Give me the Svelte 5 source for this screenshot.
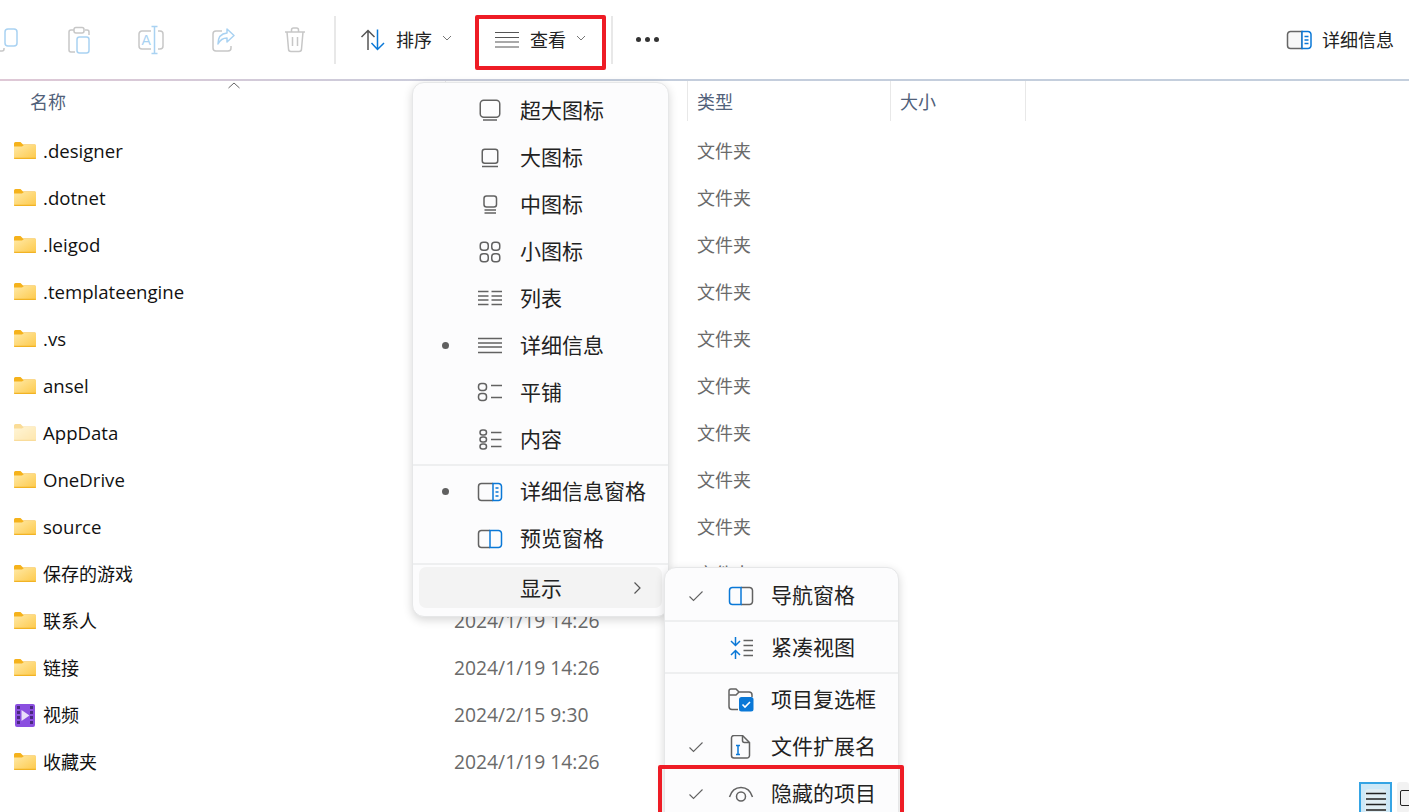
<script>
  const files = [
    { n: '.designer', t: '文件夹' }, { n: '.dotnet', t: '文件夹' }, { n: '.leigod', t: '文件夹' },
    { n: '.templateengine', t: '文件夹' }, { n: '.vs', t: '文件夹' }, { n: 'ansel', t: '文件夹' },
    { n: 'AppData', t: '文件夹', faded: true }, { n: 'OneDrive', t: '文件夹' }, { n: 'source', t: '文件夹' },
    { n: '保存的游戏', t: '文件夹', cjk: true }, { n: '联系人', d: '2024/1/19 14:26', cjk: true }, { n: '链接', d: '2024/1/19 14:26', cjk: true },
    { n: '视频', d: '2024/2/15 9:30', video: true, cjk: true }, { n: '收藏夹', d: '2024/1/19 14:26', cjk: true }
  ];
</script>

{#snippet mitem(label, bullet, icon)}
  <div class="mi">
    <span class="mark">{#if bullet}<i class="dot"></i>{/if}</span>
    <span class="ic">{@render icon()}</span>
    <span class="lb">{label}</span>
  </div>
{/snippet}

{#snippet subitem(label, check, icon)}
  <div class="si">
    <span class="smark">{#if check}<svg width="16" height="12" viewBox="0 0 16 12"><path d="M1.500 6.500 5.500 10.500 14.500 1.500" class="g thin"/></svg>{/if}</span>
    <span class="ic">{@render icon()}</span>
    <span class="lb">{label}</span>
  </div>
{/snippet}

{#snippet ixl()}<svg width="30" height="24" viewBox="0 0 30 24"><rect x="5.250" y="1.250" width="19.500" height="17" rx="3.500" class="g"/><path d="M8 21h14" class="g"/></svg>{/snippet}
{#snippet il()}<svg width="30" height="24" viewBox="0 0 30 24"><rect x="7.250" y="3.250" width="15.500" height="14" rx="2.500" class="g"/><path d="M7 20.500h16" class="g"/></svg>{/snippet}
{#snippet im()}<svg width="30" height="24" viewBox="0 0 30 24"><rect x="9" y="3" width="12.500" height="11" rx="2.500" class="g"/><path d="M9.500 17h11.500M9.500 20h11.500" class="g"/></svg>{/snippet}
{#snippet is()}<svg width="30" height="24" viewBox="0 0 30 24"><rect x="5.250" y="2.250" width="8" height="8" rx="3" class="g"/><rect x="16.750" y="2.250" width="8" height="8" rx="3" class="g"/><rect x="5.250" y="13.750" width="8" height="8" rx="3" class="g"/><rect x="16.750" y="13.750" width="8" height="8" rx="3" class="g"/></svg>{/snippet}
{#snippet ilist()}<svg width="30" height="24" viewBox="0 0 30 24"><path d="M3 4.500h10.500M3 9h10.500M3 13h10.500M3 17.500h10.500M16.500 4.500H27M16.500 9H27M16.500 13H27M16.500 17.500H27" class="g"/></svg>{/snippet}
{#snippet idetail()}<svg width="30" height="24" viewBox="0 0 30 24"><path d="M3 4.500h24M3 9h24M3 13h24M3 18.500h24" class="g"/></svg>{/snippet}
{#snippet itile()}<svg width="30" height="24" viewBox="0 0 30 24"><rect x="3.500" y="2.500" width="8" height="7" rx="3" class="g"/><rect x="3.500" y="12.500" width="8" height="7" rx="3" class="g"/><path d="M16 4.500h11M16 16.500h11" class="g"/></svg>{/snippet}
{#snippet icontent()}<svg width="30" height="24" viewBox="0 0 30 24"><rect x="5" y="2" width="6.500" height="5" rx="2.500" class="g"/><rect x="5" y="9" width="6.500" height="5" rx="2.500" class="g"/><rect x="5" y="16" width="6.500" height="5" rx="2.500" class="g"/><path d="M16 4.500h10.500M16 11.500h10.500M16 18.500h10.500" class="g"/></svg>{/snippet}
{#snippet ipanedetail()}<svg width="30" height="24" viewBox="0 0 30 24"><path d="M18 3.500H6.500a3 3 0 0 0-3 3v11a3 3 0 0 0 3 3H18" class="g"/><path d="M18 3.500h5.500a3 3 0 0 1 3 3v11a3 3 0 0 1-3 3H18z" class="b"/><path d="M20.500 8h3M20.500 12h3M20.500 16h3" class="b"/></svg>{/snippet}
{#snippet ipanepre()}<svg width="30" height="24" viewBox="0 0 30 24"><path d="M15 3.500H6.500a3 3 0 0 0-3 3v11a3 3 0 0 0 3 3H15" class="g"/><path d="M15 3.500h8.500a3 3 0 0 1 3 3v11a3 3 0 0 1-3 3H15z" class="b"/></svg>{/snippet}
{#snippet inav()}<svg width="30" height="24" viewBox="0 0 30 24"><path d="M15 3.500h8.500a3 3 0 0 1 3 3v11a3 3 0 0 1-3 3H15" class="g"/><path d="M15 3.500H6.500a3 3 0 0 0-3 3v11a3 3 0 0 0 3 3H15z" class="b"/></svg>{/snippet}
{#snippet icompact()}<svg width="30" height="24" viewBox="0 0 30 24"><path d="M9.500 1v8.500M5 5l4.500 4.500L14 5M9.500 23v-8.500M5 19l4.500-4.500L14 19" class="b"/><path d="M17.500 4.500h9.500M17.500 9.500h9.500M17.500 14.500h9.500M17.500 19.500h9.500" class="g"/></svg>{/snippet}
{#snippet icheck()}<svg width="30" height="24" viewBox="0 0 30 24"><path d="M12 21.500H6a3 3 0 0 1-3-3V3a2 2 0 0 1 2-2h5l3 3h10a3 3 0 0 1 3 3V9" class="g"/><path d="M3.500 7H10l3-3" class="g"/><rect x="13" y="9" width="14.500" height="14.500" rx="2.500" fill="#0a78d7"/><path d="M16.500 16.500l2.500 2.500 5-5" fill="none" stroke="#fff" stroke-width="1.600"/></svg>{/snippet}
{#snippet ifile()}<svg width="30" height="24" viewBox="0 0 30 24"><path d="M8 0.500h8.500l7 7v13a2.500 2.500 0 0 1-2.500 2.500H8a2.500 2.500 0 0 1-2.500-2.500V3A2.500 2.500 0 0 1 8 0.500z" class="g"/><path d="M16.500 1v4.500a2 2 0 0 0 2 2H23" class="g"/><path d="M10 10.500h4M10 19.500h4M12 10.500v9" class="b"/></svg>{/snippet}
{#snippet ieye()}<svg width="30" height="24" viewBox="0 0 30 24"><path d="M3.500 15C5.500 8.500 10 5.500 15 5.500s9.500 3 11.500 9.500" class="g"/><circle cx="15" cy="14.500" r="4.500" class="g"/></svg>{/snippet}

{#snippet folder(faded)}
  <svg class="fold" class:faded width="24" height="19" viewBox="0 0 24 19"><defs><linearGradient id="fb" x1="0" y1="0" x2="1" y2="1"><stop offset="0" stop-color="#ffe9a6"/><stop offset="1" stop-color="#fdc94a"/></linearGradient></defs><path d="M1 2.500A1.500 1.500 0 0 1 2.500 1h5L10 3.500h12.500V6H1z" fill="#f5b21b"/><path d="M1 5.500h8L11 4h11a1 1 0 0 1 1 1v12a1 1 0 0 1-1 1H2a1 1 0 0 1-1-1z" fill="url(#fb)"/><path d="M1 16.800h22v.5a.8.8 0 0 1-.8.8H1.800a.8.8 0 0 1-.8-.8z" fill="#f2b324"/></svg>
{/snippet}

<div class="page">
  <header class="toolbar">
    <div class="tb cut"><svg width="24" height="26" viewBox="0 0 24 26"><rect x="6" y="2" width="12" height="17" rx="3" fill="none" stroke="#a9d2f2" stroke-width="1.500"/><path d="M5 21v1a2 2 0 0 1-2 2H-5" fill="none" stroke="#c7c7c7" stroke-width="1.500"/></svg></div>
    <div class="tb"><svg width="24" height="28" viewBox="0 0 24 28"><path d="M7 4H4a2 2 0 0 0-2 2v18a2 2 0 0 0 2 2h4" fill="none" stroke="#c7c7c7" stroke-width="1.500"/><path d="M18 4h2a2 2 0 0 1 2 2v3" fill="none" stroke="#c7c7c7" stroke-width="1.500"/><rect x="7" y="1.500" width="10" height="5.500" rx="2" fill="none" stroke="#c7c7c7" stroke-width="1.500"/><rect x="10" y="11" width="12" height="16" rx="2.500" fill="none" stroke="#a9d2f2" stroke-width="1.500"/></svg></div>
    <div class="tb"><svg width="26" height="30" viewBox="0 0 26 30"><path d="M13 6H4a3 3 0 0 0-3 3v12a3 3 0 0 0 3 3h9M20 6h2a3 3 0 0 1 3 3v12a3 3 0 0 1-3 3h-2" fill="none" stroke="#c7c7c7" stroke-width="1.500"/><path d="M16.500 2v26M13.500 1.500h6M13.500 28.500h6" fill="none" stroke="#a9d2f2" stroke-width="1.500"/><text x="3.500" y="20" font-size="14" fill="#a9d2f2" class="glyph">A</text></svg></div>
    <div class="tb"><svg width="24" height="26" viewBox="0 0 24 26"><path d="M11 4H5a3 3 0 0 0-3 3v14a3 3 0 0 0 3 3h12a3 3 0 0 0 3-3v-2" fill="none" stroke="#c7c7c7" stroke-width="1.500"/><path d="M16 2l7 6.500-7 6.500v-4c-5 0-7 2-9 6 0-7 3-10.500 9-11z" fill="none" stroke="#a9d2f2" stroke-width="1.500" stroke-linejoin="round"/></svg></div>
    <div class="tb"><svg width="22" height="26" viewBox="0 0 22 26"><path d="M1 5h20M7.500 5V3a2 2 0 0 1 2-2h3a2 2 0 0 1 2 2v2M3 5l1.500 17a2.500 2.500 0 0 0 2.500 2.500h8a2.500 2.500 0 0 0 2.500-2.500L19 5M8.500 10v9M13.500 10v9" fill="none" stroke="#c7c7c7" stroke-width="1.500"/></svg></div>
    <i class="vsep first"></i>
    <div class="cmd sort">
      <svg width="26" height="24" viewBox="0 0 26 24"><path d="M8 22V3M1.500 9 8 2.500 14.500 9" fill="none" stroke="#555" stroke-width="1.500"/><path d="M17.500 1.500V21M11.500 15l6 6.500 6.500-6.500" fill="none" stroke="#0a78d7" stroke-width="1.500"/></svg>
      <span class="cmdl">排序</span>
      <svg class="chev" width="10" height="6" viewBox="0 0 10 6"><path d="M1 1l4 4 4-4" fill="none" stroke="#777"/></svg>
    </div>
    <div class="cmd view">
      <svg width="24" height="18" viewBox="0 0 24 18"><path d="M0 1.500h24M0 6.500h24M0 11h24M0 16h24" fill="none" stroke="#555" stroke-width="1.200"/></svg>
      <span class="cmdl">查看</span>
      <svg class="chev" width="10" height="6" viewBox="0 0 10 6"><path d="M1 1l4 4 4-4" fill="none" stroke="#777"/></svg>
    </div>
    <i class="vsep second"></i>
    <div class="more"><i></i><i></i><i></i></div>
    <div class="details">
      <svg width="26" height="20" viewBox="0 0 26 20"><path d="M16 1.500H4.500a3 3 0 0 0-3 3v11a3 3 0 0 0 3 3H16z" fill="#f7f7f7" stroke="#666" stroke-width="1.500"/><path d="M16 1.500h6a3 3 0 0 1 3 3v11a3 3 0 0 1-3 3h-6z" fill="#fff" stroke="#0a78d7" stroke-width="1.500"/><path d="M18.500 6.500h4M18.500 10h4M18.500 13.500h4" stroke="#0a78d7" stroke-width="1.400"/></svg>
      <span class="cmdl">详细信息</span>
    </div>
  </header>
  <div class="rule"></div>

  <div class="cols">
    <div class="col c1"><span>名称</span><svg class="sortup" width="12" height="7" viewBox="0 0 12 7"><path d="M.5 6 6 1l5.500 5" fill="none" stroke="#666"/></svg></div>
    <div class="col c2"></div>
    <div class="col c3"><span>类型</span></div>
    <div class="col c4"><span>大小</span></div>
  </div>

  <div class="list">
    {#each files as f}
      <div class="row">
        <div class="name">
          {#if f.video}
            <svg class="fold" width="24" height="24" viewBox="0 0 24 24"><rect x="2" y="1" width="20" height="23" rx="2" fill="#8b4fe0"/><path d="M4 3h3v3H4zM4 8h3v3H4zM4 13h3v3H4zM4 18h3v3H4zM17 3h3v3h-3zM17 8h3v3h-3zM17 13h3v3h-3zM17 18h3v3h-3z" fill="#4a2a80"/><path d="M8.500 7l8 5.500-8 5.500z" fill="#e9defa"/></svg>
          {:else}
            {@render folder(f.faded)}
          {/if}
          <span class:cjk={f.cjk}>{f.n}</span>
        </div>
        <div class="date">{f.d ?? ''}</div>
        <div class="type">{f.t ?? ''}</div>
      </div>
    {/each}
  </div>

  <div class="viewbtns">
    <div class="vb on"><div class="vbin"><svg width="20" height="20" viewBox="0 0 20 20"><path d="M0 1.500h20M0 7h20M0 12.500h20M0 18h20" stroke="#222" stroke-width="1.300"/></svg></div></div>
    <div class="vb off"></div>
  </div>

  <div class="menu main">
    {@render mitem('超大图标', false, ixl)}
    {@render mitem('大图标', false, il)}
    {@render mitem('中图标', false, im)}
    {@render mitem('小图标', false, is)}
    {@render mitem('列表', false, ilist)}
    {@render mitem('详细信息', true, idetail)}
    {@render mitem('平铺', false, itile)}
    {@render mitem('内容', false, icontent)}
    <div class="sep"></div>
    {@render mitem('详细信息窗格', true, ipanedetail)}
    {@render mitem('预览窗格', false, ipanepre)}
    <div class="sep"></div>
    <div class="showrow">
      <span class="showl">显示</span>
      <svg width="9" height="14" viewBox="0 0 9 14"><path d="M1.500 1.500 7 7l-5.500 5.500" fill="none" stroke="#555" stroke-width="1.200"/></svg>
    </div>
  </div>

  <div class="menu submenu">
    {@render subitem('导航窗格', true, inav)}
    <div class="sep"></div>
    {@render subitem('紧凑视图', false, icompact)}
    <div class="sep"></div>
    {@render subitem('项目复选框', false, icheck)}
    {@render subitem('文件扩展名', true, ifile)}
    {@render subitem('隐藏的项目', true, ieye)}
  </div>

  <div class="mark-box box1"></div>
  <div class="mark-box box2"></div>
</div>

<style>
  :global(body) { margin: 0; background: #fff; }
  .page { position: relative; width: 1409px; height: 812px; overflow: hidden; background: #fff;
    font-family: "Open Sans", "Noto Sans CJK SC", sans-serif; color: #1a1a1a; font-size: 18px; }
  .toolbar { display: flex; align-items: center; height: 79px; }
  .tb { width: 72px; display: flex; justify-content: center; align-items: center; flex: none; }
  .cut { width: 7px; overflow: visible; justify-content: flex-start; margin-right: 36px; }
  .cut svg { margin-left: -1px; overflow: visible; flex: none; }
  .vsep { display: block; width: 2px; height: 48px; background: #e8e8e8; flex: none; }
  .vsep.first { margin-left: 3px; }
  .vsep.second { margin-left: 25px; }
  .cmd { display: flex; align-items: center; flex: none; }
  .cmdl { font-family: "Noto Sans CJK SC", sans-serif; font-size: 18px; color: #222; line-height: 24px; padding-bottom: 2px; }
  .sort { margin-left: 24px; }
  .sort .cmdl { margin-left: 10px; }
  .chev { margin-left: 10px; margin-top: -3px; }
  .view { margin-left: 43px; }
  .view .cmdl { margin-left: 11px; }
  .more { display: flex; gap: 4px; margin-left: 23px; }
  .more i { width: 5px; height: 5px; border-radius: 50%; background: #333; display: block; }
  .details { margin-left: auto; margin-right: 15px; display: flex; align-items: center; gap: 10px; }
  .rule { height: 2px; background: linear-gradient(90deg, #dfc8d6, #c4cddc 40%, #c4cfdd); }
  .cols { display: grid; grid-template-columns: 446px 242px 203px 135px; height: 40px; color: #51617a; }
  .col { padding-left: 9px; display: flex; align-items: center; border-right: 1px solid #e8e8e8; position: relative;
    font-family: "Noto Sans CJK SC", sans-serif; font-size: 18px; box-sizing: border-box; }
  .col.c1 { padding-left: 30px; }
  .sortup { position: absolute; left: 228px; top: 1px; }
  .list { padding-top: 6px; }
  .row { display: grid; grid-template-columns: 454px 243px 1fr; height: 47px; align-items: center; }
  .name { display: flex; align-items: center; padding-left: 13px; gap: 6px; font-size: 18.600px; color: #111; }
  .name span { line-height: 24px; }
  .name span.cjk { font-size: 18px; }
  .fold { flex: none; }
  .fold.faded { opacity: .45; }
  .date { color: #6a6a6a; font-size: 19.300px; }
  .type { color: #6a6a6a; font-size: 18px; font-family: "Noto Sans CJK SC", sans-serif; padding-bottom: 2px; }
  .viewbtns { position: absolute; right: 0; bottom: 0; display: flex; gap: 5px; width: 50px; height: 30px; }
  .vb { box-sizing: border-box; width: 33px; height: 31px; flex: none; }
  .vb.on { background: #cde8f7; border: 2px solid #35a4e4; border-bottom: 0; padding: 5px 4px 0; }
  .vbin { background: #e0edf3; border-radius: 4px 4px 0 0; height: 100%; display: flex; justify-content: center; padding-top: 3px; box-sizing: border-box; }
  .vb.off { background: #f2f2f2; border-radius: 3px; width: 12px; position: relative; }
  .vb.off::after { content: ""; position: absolute; left: 3px; top: 8px; width: 12px; height: 14px; border: 1.500px solid #222; border-radius: 2px; }

  .menu { position: absolute; box-sizing: border-box; background: #fcfcfd; border: 1px solid #e6e7e8;
    border-radius: 12px; box-shadow: 0 3px 10px rgba(0,0,0,.16); font-family: "Noto Sans CJK SC", sans-serif;
    font-size: 21px; color: #222; }
  .main { left: 412px; top: 82px; width: 257px; height: 535px; padding-top: 4px; }
  .submenu { left: 664px; top: 567px; width: 235px; height: 280px; padding-top: 4px; }
  .mi, .si { display: flex; align-items: center; height: 47px; }
  .mark { width: 62px; display: flex; justify-content: center; padding-left: 3px; box-sizing: border-box; flex: none; }
  .dot { width: 7px; height: 7px; border-radius: 50%; background: #606060; display: block; }
  .ic { width: 30px; height: 24px; display: block; flex: none; }
  .lb { margin-left: 15px; padding-bottom: 4px; }
  .smark { width: 61px; display: flex; justify-content: center; box-sizing: border-box; flex: none; }
  .sep { height: 2px; background: #eeeff0; margin: 1px 0 2px; }
  .showrow { display: flex; align-items: center; justify-content: space-between; height: 41px; margin: 2px 6px 0;
    background: #f3f3f3; border-radius: 7px; padding: 0 20px 0 101px; }
  .showl { padding-bottom: 1px; }
  svg { display: block; }
  .g, .b { fill: none; stroke-width: 1.500; }
  .g { stroke: #626262; }
  .b { stroke: #0a78d7; }
  .g.thin { stroke-width: 1.100; }
  .glyph { font-family: "Liberation Sans", sans-serif; }
  .mark-box { position: absolute; box-sizing: border-box; border: 4px solid #ee1c25; border-radius: 2px; }
  .box1 { left: 475px; top: 15px; width: 131px; height: 55px; }
  .box2 { left: 658px; top: 765px; width: 246px; height: 70px; }
</style>
